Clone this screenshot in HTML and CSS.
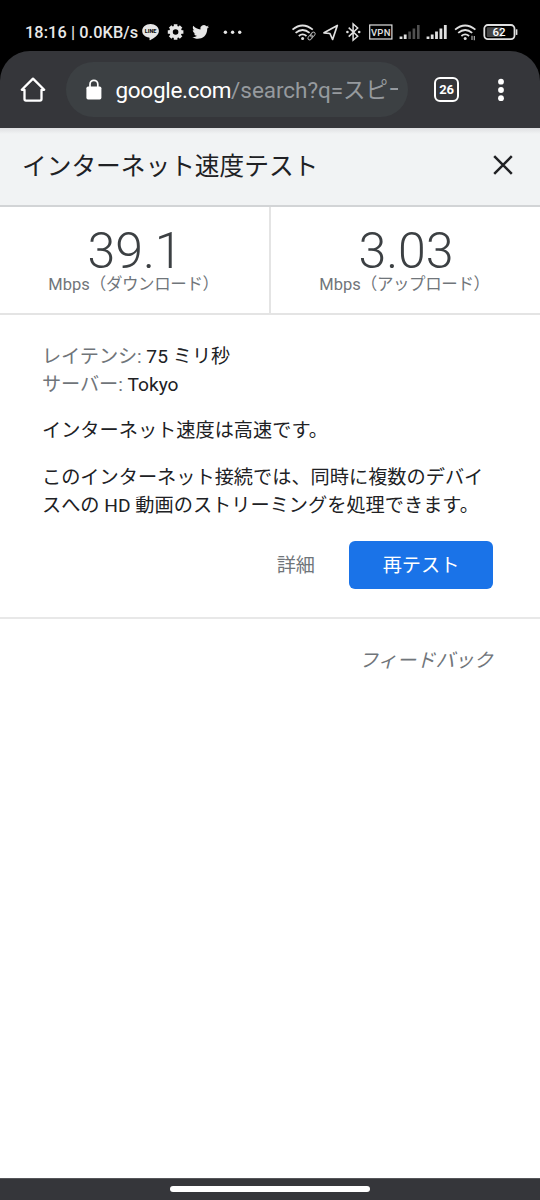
FILE: index.html
```html
<!DOCTYPE html>
<html lang="ja">
<head>
<meta charset="utf-8">
<title>インターネット速度テスト</title>
<link rel="stylesheet" href="styles.css">
</head>
<body>
<div class="screen">
  <div class="status">
    <span class="clock">18:16 | 0.0KB/s</span>
    <svg class="notif" width="102" height="20" viewBox="142 22 102 20" fill="#e6e6e6">
      <path d="M150.500 24c-4.800 0-8.300 3-8.300 6.900 0 3.400 2.900 6 6.700 6.700 1 .2.700 1 .6 2.100 0 .6.500.5 1 .2 3.100-1.700 8.400-4.600 8.400-9 0-3.900-3.600-6.900-8.400-6.900z"/>
      <text class="line-label" x="150.600" y="33" text-anchor="middle">LINE</text>
      <g>
        <circle cx="175.600" cy="32" r="4.500" fill="none" stroke="#e6e6e6" stroke-width="3.400"/>
        <g stroke="#e6e6e6" stroke-width="3.600">
          <path d="M175.600 24.200v3M175.600 36.800v3M167.800 32h3M180.400 32h3M170.100 26.500l2 2M179.100 35.500l2 2M170.100 37.500l2-2M179.100 28.500l2-2"/>
        </g>
      </g>
      <path transform="translate(192 23.200) scale(.72)" d="M23.600 4.900c-.8.400-1.700.6-2.700.8 1-.6 1.700-1.500 2-2.600-.9.500-1.900.9-3 1.100A4.800 4.800 0 0 0 11.700 8.600C7.700 8.400 4.200 6.500 1.800 3.600c-1.300 2.200-.7 5 1.500 6.400-.8 0-1.500-.2-2.200-.6 0 2.300 1.600 4.300 3.800 4.800-.7.200-1.400.2-2.100.1.600 1.900 2.400 3.300 4.500 3.300A9.600 9.600 0 0 1 .4 19.500C7 23.700 21.200 22.300 21.200 7.400c1-.7 1.800-1.500 2.400-2.500z"/>
      <circle cx="225.400" cy="32.300" r="1.700"/><circle cx="232.600" cy="32.300" r="1.700"/><circle cx="239.700" cy="32.300" r="1.700"/>
    </svg>
    <svg class="system" width="228" height="20" viewBox="290 22 228 20" fill="none" stroke="#e0e0e0" stroke-width="1.800">
      <path d="M292.500 29.600q10-8.300 20.300 0M295.600 32.900q7-5.800 14 0M298.800 36q3.800-3.200 7.700 0"/>
      <circle cx="302.600" cy="38.400" r="1.500" fill="#e0e0e0" stroke="none"/>
      <g transform="rotate(-48 311.400 36)" stroke="#aaa" stroke-width="1">
        <rect x="306.900" y="34.400" width="5.400" height="3.400" rx="1.700"/><rect x="310.700" y="34.400" width="5.400" height="3.400" rx="1.700"/>
      </g>
      <path d="M324 32.800l13.300-7.300-4.700 14-2.700-6z" stroke-width="1.700" stroke-linejoin="round"/>
      <path d="M348.700 27.600l9 8.600-4.600 4V24l4.600 4-9 8.600" stroke-width="1.500"/>
      <circle cx="347.400" cy="32" r="1.300" fill="#e0e0e0" stroke="none"/><circle cx="359.200" cy="32" r="1.300" fill="#e0e0e0" stroke="none"/>
      <rect x="369.700" y="25" width="22.200" height="14" stroke-width="1.200"/>
      <text class="vpn" x="380.800" y="35.700" text-anchor="middle">VPN</text>
      <path d="M401 39v-2.600M405.200 39v-4.600" stroke-width="2.800"/>
      <path d="M409.600 39v-7.600M413.900 39v-10.400M418.300 39v-14" stroke="#505050" stroke-width="2.600"/>
      <path d="M428 39v-2.600M432.200 39v-4.600M436.500 39v-7.600M440.900 39v-10.400M445.300 39v-14" stroke-width="2.800"/>
      <path d="M455.100 29.600q10-8.300 20.300 0M458.200 32.900q7-5.800 14 0M461.400 36q3.800-3.200 7.700 0"/>
      <circle cx="465.200" cy="38.400" r="1.500" fill="#e0e0e0" stroke="none"/>
      <path d="M472 40v-4.200M474.300 36v4.200" stroke-width="1.100" stroke="#bbb"/>
      <rect x="484.300" y="25" width="30.200" height="14.200" rx="3.600"/>
      <rect x="486.800" y="27.300" width="15.500" height="9.600" rx="1" fill="#444" stroke="none"/>
      <path d="M516.600 29.300v5.600" stroke-width="1.600"/>
      <text class="battery" x="499" y="36.300" text-anchor="middle">62</text>
    </svg>
  </div>

  <div class="toolbar">
    <svg class="home" width="28" height="28" viewBox="19 76 28 28" fill="none" stroke="#fff" stroke-width="2.300" stroke-linejoin="round" stroke-linecap="round">
      <path d="M21.800 89.800L33 78.600l11.200 11.200h-2.700v9.300q0 1.500-1.500 1.500H26q-1.500 0-1.500-1.500v-9.300z"/>
    </svg>
    <div class="omnibox">
      <svg class="lock" width="16" height="22" viewBox="0 0 16 22">
        <rect x=".4" y="7.500" width="15" height="13" rx="1.700" fill="#fff"/>
        <path d="M4 8.500V5.200a3.900 3.900 0 0 1 7.800 0v3.300" fill="none" stroke="#fff" stroke-width="1.700"/>
      </svg>
      <span class="url"><span class="host">google.com</span>/search?q=スピー</span>
    </div>
    <span class="tabs">26</span>
    <svg class="menu" width="8" height="24" viewBox="0 0 8 24" fill="#fff"><circle cx="4" cy="3.700" r="2.900"/><circle cx="4" cy="12" r="2.900"/><circle cx="4" cy="20.200" r="2.900"/></svg>
  </div>

  <div class="header">
    <h1 class="title">インターネット速度テスト</h1>
    <svg class="close" width="20" height="20" viewBox="0 0 20 20" stroke="#202124" stroke-width="2.500"><path d="M1.200 1.200l17.600 17.600M18.800 1.200L1.200 18.800"/></svg>
  </div>

  <div class="stats">
    <div class="stat"><div class="value">39.1</div><div class="unit">Mbps<span class="kana">（ダウンロード）</span></div></div>
    <div class="stat"><div class="value">3.03</div><div class="unit">Mbps<span class="kana">（アップロード）</span></div></div>
  </div>

  <div class="details">
    <p class="facts"><span class="muted">レイテンシ:</span> 75 ミリ秒<br><span class="muted">サーバー:</span> Tokyo</p>
    <p>インターネット速度は高速です。</p>
    <p>このインターネット接続では、同時に複数のデバイ<br>スへの HD 動画のストリーミングを処理できます。</p>
    <div class="actions"><span class="more">詳細</span><span class="retest">再テスト</span></div>
  </div>
  <div class="feedback"><span class="feedback-link">フィードバック</span></div>
  <div class="navbar"><div class="handle"></div></div>
</div>
</body>
</html>
```
FILE: styles.css
```css
* { box-sizing: border-box; }
body { margin: 0; background: #000; font-family: Roboto, "Noto Sans CJK JP", sans-serif; color: #202124; }
.screen { width: 540px; height: 1200px; display: flex; flex-direction: column; overflow: hidden; }
.status { height: 51px; flex: none; display: flex; align-items: center; padding: 13px 22px 0 25px; background: #000; }
.clock { width: 117px; font-size: 16.300px; font-weight: 500; color: #e8e8e8; white-space: nowrap; letter-spacing: .1px; }
.notif, .system { flex: none; }
.system { margin-left: auto; }
.line-label { font: 900 5.500px Roboto, sans-serif; fill: #111; }
.vpn { font: 500 9.500px Roboto, sans-serif; fill: #e0e0e0; stroke: none; letter-spacing: .3px; }
.battery { font: 500 11.500px Roboto, sans-serif; fill: #fff; stroke: none; }

.toolbar { height: 77px; flex: none; display: flex; align-items: center; background: #35363a; border-radius: 30px 30px 0 0; padding: 0 35px 0 19px; }
.home { flex: none; }
.omnibox { width: 342px; height: 55px; margin-left: 19px; border-radius: 28px; background: #3c4043; display: flex; align-items: center; padding-left: 20px; }
.lock { flex: none; }
.url { margin-left: 13.500px; font-size: 22.500px; letter-spacing: -.05px; line-height: 32px; color: #969a9e; white-space: nowrap; width: 282px; overflow: hidden; }
.host { color: #fff; letter-spacing: -.3px; }
.tabs { width: 25px; height: 25px; margin-left: 26px; border: 2.500px solid #fff; border-radius: 6px; color: #fff; font-size: 13px; font-weight: 700; letter-spacing: -.2px; line-height: 21px; text-align: center; }
.menu { margin-left: auto; }

.header { height: 79px; flex: none; display: flex; align-items: center; justify-content: space-between; padding: 0 27px 3px 22px; border-bottom: 2px solid #d2d4d6; background: linear-gradient(#dfe0e2, #f1f3f4 6px); }
.title { margin: 3px 0 0; font-size: 24.700px; font-weight: 400; line-height: 36px; }

.stats { height: 108px; flex: none; display: grid; grid-template-columns: 269px 1fr; background: #fff; border-bottom: 2px solid #e4e4e4; }
.stat { text-align: center; padding: 19px 0 0 1px; }
.stat + .stat { border-left: 2px solid #e4e4e4; }
.value { font-size: 50px; font-weight: 300; line-height: 50px; color: #3c4043; }
.unit { margin-left: -3px; font-size: 16.500px; line-height: 18px; color: #70757a; white-space: nowrap; }
.kana { letter-spacing: -.4px; }

.details { height: 304px; flex: none; padding: 28px 47px 0 42px; background: #fff; border-bottom: 2px solid #e8e8e8; font-size: 19.200px; line-height: 28px; }
.details p { margin: 0 0 19px; white-space: nowrap; }
.details .facts { line-height: 27.500px; }
.muted { color: #70757a; letter-spacing: -.1px; }
.actions { display: flex; justify-content: flex-end; align-items: center; gap: 34px; margin-top: 21px; }
.more { color: #70757a; padding-top: 1px; }
.retest { width: 144px; height: 48px; border-radius: 6px; background: #1a73e8; color: #fff; text-align: center; line-height: 49px; }
.feedback { flex: 1; background: #fff; padding: 28px 47px 0 0; text-align: right; }
.feedback-link { font-size: 19.200px; line-height: 28px; font-style: italic; color: #70757a; }
.navbar { height: 22px; flex: none; background: #35363a; border-top: 1px solid #55565a; padding-top: 7px; }
.handle { width: 200px; height: 6px; margin: 0 auto; border-radius: 3px; background: #fff; }
```
